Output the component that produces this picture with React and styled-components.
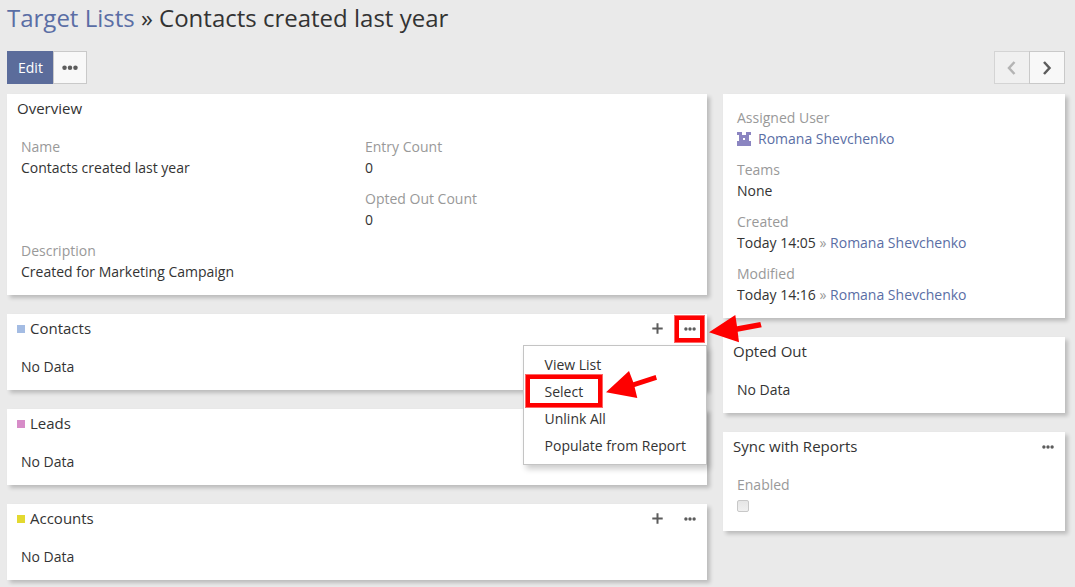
import { useState } from 'react'
import styled, { createGlobalStyle, css } from 'styled-components'

const GlobalStyle = createGlobalStyle`
  * {
    box-sizing: border-box;
  }
  body {
    margin: 0;
    background-color: #eaeaea;
    color: #333;
    font-family: 'Open Sans', 'Noto Sans', sans-serif;
    font-size: 14px;
    line-height: 21px;
  }
  button {
    font: inherit;
    cursor: pointer;
  }
`

const Page = styled.main`
  padding: 0 10px 7px 7px;
`

const PageTitle = styled.h3`
  margin: 0;
  padding: 1px 0 17px;
  font-size: 24px;
  font-weight: 400;
  line-height: 33px;
`

const TextLink = styled.a`
  color: #5a6ea5;
  text-decoration: none;
  &:hover {
    text-decoration: underline;
  }
`

const Toolbar = styled.div`
  display: flex;
  justify-content: space-between;
  margin-bottom: 10px;
`

const ButtonGroup = styled.div`
  display: flex;
`

const Button = styled.button`
  display: flex;
  align-items: center;
  justify-content: center;
  height: 33px;
  min-width: 34px;
  padding: 0 8px;
  border: 1px solid #c9c9c9;
  background-color: #f8f8f8;
  color: #5c5c5c;
  & + & {
    margin-left: -1px;
  }
  ${({ $primary }) =>
    $primary &&
    css`
      padding: 0 10px;
      border-color: #5b6c9b;
      background-color: #5b6c9b;
      color: #fff;
    `}
`

const PagerButton = styled(Button)`
  width: 36px;
  &:disabled {
    border-color: #d4d4d4;
    background-color: #f0f0f0;
    color: #b4b4b4;
    cursor: default;
  }
`

const Record = styled.div`
  display: grid;
  grid-template-columns: repeat(3, 1fr);
  gap: 16px;
  align-items: start;
`

const Column = styled.div`
  display: flex;
  flex-direction: column;
  gap: 19px;
  grid-column: span ${({ $span }) => $span || 1};
`

const PanelBox = styled.section`
  position: relative;
  background-color: #fff;
  box-shadow: 3px 3px 4px rgba(0, 0, 0, 0.2);
`

const PanelHeader = styled.header`
  display: flex;
  align-items: center;
  height: 29px;
  padding-left: 10px;
`

const PanelTitle = styled.h4`
  flex: 1;
  display: flex;
  align-items: center;
  gap: 5px;
  margin: 0;
  font-size: 15px;
  font-weight: 400;
`

const ColorMark = styled.span`
  width: 8px;
  height: 8px;
  background-color: ${({ $color }) => $color};
`

const PanelActions = styled.div`
  display: flex;
  padding-right: 1px;
`

const IconButton = styled.button`
  display: flex;
  align-items: center;
  justify-content: center;
  width: 32px;
  height: 29px;
  padding: 0;
  border: 0;
  background: none;
  color: #5c5c5c;
`

const PlusButton = styled(IconButton)`
  padding-right: 1px;
`

const PanelBody = styled.div`
  padding: 13px 14px;
`

const Fields = styled.div`
  display: grid;
  grid-template-columns: ${({ $columns }) => `repeat(${$columns || 1}, 1fr)`};
  gap: 10px 16px;
`

const FieldBox = styled.div`
  grid-column-start: ${({ $column }) => $column || 'auto'};
`

const Label = styled.label`
  display: block;
  color: #999;
`

const Soft = styled.span`
  color: #999;
`

const UserRow = styled.div`
  display: flex;
  align-items: center;
  gap: 7px;
`

const CheckRow = styled.div`
  display: flex;
  height: 23px;
  padding-top: 5px;
`

const Checkbox = styled.input`
  appearance: none;
  width: 12px;
  height: 12px;
  margin: 0;
  border: 1px solid #c8c8c8;
  border-radius: 2px;
  background: linear-gradient(#e6e6e6, #f0f0f0);
`

const Menu = styled.ul`
  position: absolute;
  z-index: 2;
  top: 31px;
  right: 0;
  margin: 0;
  padding: 5px 0;
  list-style: none;
  border: 1px solid #c4c4c4;
  background-color: #fff;
  box-shadow: 3px 4px 6px rgba(0, 0, 0, 0.2);
`

const MenuItem = styled.li`
  position: relative;
`

const MenuButton = styled.button`
  width: 100%;
  padding: 3px 20px 3px 21px;
  border: 0;
  background: none;
  color: #333;
  text-align: left;
  white-space: nowrap;
`

const Anchor = styled.div`
  position: relative;
`

const Highlight = styled.span`
  position: absolute;
  z-index: 3;
  inset: ${({ $inset }) => $inset};
  border: 5px solid #fe0000;
  outline: 1px solid rgba(255, 255, 255, 0.4);
  outline-offset: -1px;
  pointer-events: none;
`

const Arrow = styled.svg`
  position: absolute;
  z-index: 3;
  left: ${({ $left }) => $left};
  top: ${({ $top }) => $top};
  fill: #fe0000;
  pointer-events: none;
`

const Dots = ({ size = 12 }) => (
  <svg width={size} height={size / 3} viewBox='0 0 12 4' fill='currentColor' aria-hidden='true'>
    <circle cx='1.9' cy='2' r='1.7' />
    <circle cx='6' cy='2' r='1.7' />
    <circle cx='10.1' cy='2' r='1.7' />
  </svg>
)

const Plus = () => (
  <svg width='11' height='11' viewBox='0 0 11 11' fill='currentColor' aria-hidden='true'>
    <path d='M4.5 0.3h2v4.2h4.2v2h-4.2v4.2h-2v-4.2h-4.2v-2h4.2z' />
  </svg>
)

const Chevron = ({ d }) => (
  <svg width='10' height='14' viewBox='0 0 10 14' fill='none' stroke='currentColor' strokeWidth='2.5' aria-hidden='true'>
    <path d={d} />
  </svg>
)

const Avatar = () => (
  <svg width='14' height='14' viewBox='0 0 14 14' aria-hidden='true'>
    <path
      fill='#8b85c1'
      fillRule='evenodd'
      d='M0 0h5v3h4v-3h5v3h-2v6h2v5h-14v-5h2v-6h-2zM6 6v2h2v-2z'
    />
  </svg>
)

const Field = ({ label, column, children }) => (
  <FieldBox $column={column}>
    <Label as='div'>{label}</Label>
    <div>{children}</div>
  </FieldBox>
)

const Panel = ({ title, color, actions, children }) => (
  <PanelBox>
    {title && (
      <PanelHeader>
        <PanelTitle>
          {color && <ColorMark $color={color} />}
          {title}
        </PanelTitle>
        {actions && <PanelActions>{actions}</PanelActions>}
      </PanelHeader>
    )}
    <PanelBody>{children}</PanelBody>
  </PanelBox>
)

const menuItems = ['View List', 'Select', 'Unlink All', 'Populate from Report']

const ContactsActions = () => {
  const [open, setOpen] = useState(true)
  return (
    <>
      <PlusButton aria-label='Create contact'>
        <Plus />
      </PlusButton>
      <Anchor>
        <IconButton aria-label='Contacts actions' aria-expanded={open} onClick={() => setOpen(!open)}>
          <Dots />
        </IconButton>
        <Highlight $inset='1px 1px 0 0' />
        <Arrow $left='35px' $top='0' width='54' height='30' viewBox='0 0 54 30'>
          <path d='M0 18.3L26.3 1L28 12.3L51.3 8L52.7 13.3L28.7 17.7L30 28.3z' />
        </Arrow>
      </Anchor>
      {open && (
        <Menu>
          {menuItems.map((item) => (
            <MenuItem key={item}>
              <MenuButton>{item}</MenuButton>
              {item === 'Select' && (
                <>
                  <Highlight $inset='-4px 103px -3px 1px' />
                  <Arrow $left='82px' $top='-8px' width='52' height='30' viewBox='0 0 52 30'>
                    <path d='M0 22.3L23 1L27.3 12.3L49.6 5L51 9.7L28.6 17L31.3 28z' />
                  </Arrow>
                </>
              )}
            </MenuItem>
          ))}
        </Menu>
      )}
    </>
  )
}

const App = () => {
  return (
    <Page>
      <GlobalStyle />
      <PageTitle>
        <TextLink href='#TargetList'>Target Lists</TextLink> » Contacts created last year
      </PageTitle>
      <Toolbar>
        <ButtonGroup>
          <Button $primary>Edit</Button>
          <Button aria-label='More actions'>
            <Dots size={16} />
          </Button>
        </ButtonGroup>
        <ButtonGroup>
          <PagerButton disabled aria-label='Previous'>
            <Chevron d='M7.5 1L2 7L7.5 13' />
          </PagerButton>
          <PagerButton aria-label='Next'>
            <Chevron d='M2 1L7.5 7L2 13' />
          </PagerButton>
        </ButtonGroup>
      </Toolbar>
      <Record>
        <Column $span={2}>
          <Panel title='Overview'>
            <Fields $columns={2}>
              <Field label='Name'>Contacts created last year</Field>
              <Field label='Entry Count'>0</Field>
              <Field label='Opted Out Count' column={2}>
                0
              </Field>
              <Field label='Description' column={1}>
                Created for Marketing Campaign
              </Field>
            </Fields>
          </Panel>
          <Panel title='Contacts' color='#a4bce3' actions={<ContactsActions />}>
            No Data
          </Panel>
          <Panel title='Leads' color='#d78cc8'>
            No Data
          </Panel>
          <Panel
            title='Accounts'
            color='#e3d930'
            actions={
              <>
                <PlusButton aria-label='Create account'>
                  <Plus />
                </PlusButton>
                <IconButton aria-label='Accounts actions'>
                  <Dots />
                </IconButton>
              </>
            }>
            No Data
          </Panel>
        </Column>
        <Column>
          <Panel>
            <Fields>
              <Field label='Assigned User'>
                <UserRow>
                  <Avatar />
                  <TextLink href='#User'>Romana Shevchenko</TextLink>
                </UserRow>
              </Field>
              <Field label='Teams'>None</Field>
              <Field label='Created'>
                Today 14:05 <Soft>»</Soft> <TextLink href='#User'>Romana Shevchenko</TextLink>
              </Field>
              <Field label='Modified'>
                Today 14:16 <Soft>»</Soft> <TextLink href='#User'>Romana Shevchenko</TextLink>
              </Field>
            </Fields>
          </Panel>
          <Panel title='Opted Out'>No Data</Panel>
          <Panel
            title='Sync with Reports'
            actions={
              <IconButton aria-label='Sync actions'>
                <Dots />
              </IconButton>
            }>
            <Label htmlFor='syncEnabled'>Enabled</Label>
            <CheckRow>
              <Checkbox id='syncEnabled' type='checkbox' disabled />
            </CheckRow>
          </Panel>
        </Column>
      </Record>
    </Page>
  )
}

export default App
